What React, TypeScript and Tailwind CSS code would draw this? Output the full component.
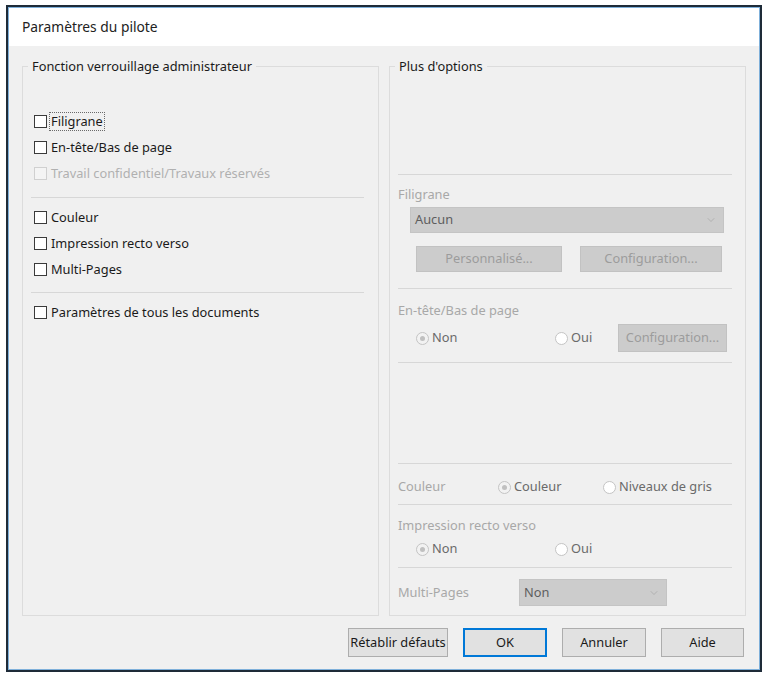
import { ChevronDown } from "lucide-react";

const font = { fontFamily: '"Noto Sans", "Open Sans", sans-serif' };

const Separator = ({ className = "" }: { className?: string }) => (
  <div className={`h-px bg-[#d7d7d7] ${className}`} />
);

const CheckRow = ({
  label,
  disabled,
  focused,
}: {
  label: string;
  disabled?: boolean;
  focused?: boolean;
}) => (
  <div className="flex items-center h-[26px] pl-[3px]">
    <span
      className={`w-[13px] h-[13px] border ${
        disabled ? "border-[#d0d0d0] bg-[#f4f4f4]" : "border-[#3a3a3a] bg-white"
      }`}
    />
    <span
      className={`ml-[2px] px-[1px] leading-[17px] border ${
        focused ? "border-dotted border-[#6a6a6a]" : "border-transparent"
      } ${disabled ? "text-[#b0b0b0]" : "text-[#1a1a1a]"}`}
    >
      {label}
    </span>
  </div>
);

const Radio = ({ label, checked }: { label: string; checked?: boolean }) => (
  <div className="flex items-center">
    <span
      className={`w-[13px] h-[13px] rounded-full border flex items-center justify-center ${
        checked ? "border-[#c4c4c4] bg-[#f2f2f2]" : "border-[#c4c4c4] bg-white"
      }`}
    >
      {checked && <span className="w-[5px] h-[5px] rounded-full bg-[#c0c0c0]" />}
    </span>
    <span className="ml-[3px] text-[#6a6a6a]">{label}</span>
  </div>
);

const Select = ({ value, className = "" }: { value: string; className?: string }) => (
  <div
    className={`flex items-center justify-between bg-[#cccccc] border border-[#c4c4c4] pl-[4px] pr-[6px] ${className}`}
  >
    <span className="text-[#5e5e5e]">{value}</span>
    <ChevronDown size={12} strokeWidth={1.2} color="#a0a0a0" />
  </div>
);

const DisabledButton = ({ label, className = "" }: { label: string; className?: string }) => (
  <div
    className={`flex items-center justify-center bg-[#cccccc] border border-[#c2c2c2] text-[#9c9c9c] ${className}`}
  >
    {label}
  </div>
);

const DialogButton = ({
  label,
  width,
  primary,
}: {
  label: string;
  width: string;
  primary?: boolean;
}) => (
  <div
    className={`h-[29px] flex items-center justify-center bg-[#e1e1e1] text-[#1a1a1a] ${width} ${
      primary ? "border-2 border-[#0078d7]" : "border border-[#adadad]"
    }`}
  >
    {label}
  </div>
);

export default function App() {
  return (
    <div className="w-[768px] h-[673px] bg-white pl-[6px] pt-[5px] text-[12.8px]" style={font}>
      <div className="w-[756px] h-[667px] border-2 border-[#1e2b38]">
        <div className="w-full h-full border border-[#7fb0da] flex flex-col">
          {/* title bar */}
          <div className="h-[38px] bg-white flex items-center pl-[13px] text-[13.8px] text-[#222]">
            Paramètres du pilote
          </div>

          <div className="flex-1 bg-[#f0f0f0] px-[13px] pt-[12px] flex flex-col">
            <div className="grid grid-cols-2 gap-[10px] h-[558px]">
              {/* left group */}
              <fieldset className="border border-[#dcdcdc] pl-[8px] pr-[14px]">
                <legend className="ml-[-3px] px-[4px] leading-[17px] text-[#1a1a1a]">
                  Fonction verrouillage administrateur
                </legend>
                <div className="pt-[33px]">
                  <CheckRow label="Filigrane" focused />
                  <CheckRow label="En-tête/Bas de page" />
                  <CheckRow label="Travail confidentiel/Travaux réservés" disabled />
                  <Separator className="mt-[11px] mb-[6px]" />
                  <CheckRow label="Couleur" />
                  <CheckRow label="Impression recto verso" />
                  <CheckRow label="Multi-Pages" />
                  <Separator className="mt-[10px] mb-[6px]" />
                  <CheckRow label="Paramètres de tous les documents" />
                </div>
              </fieldset>

              {/* right group */}
              <fieldset className="border border-[#dcdcdc] pl-[8px] pr-[13px] text-[#a8a8a8]">
                <legend className="ml-[-3px] px-[4px] leading-[17px] text-[#1a1a1a]">
                  Plus d'options
                </legend>
                <Separator className="mt-[99px]" />
                <div className="mt-[9px] leading-[20px]">Filigrane</div>
                <Select value="Aucun" className="mt-[3px] h-[26px] ml-[12px] mr-[8px]" />
                <div className="mt-[13px] flex justify-between pl-[18px] pr-[10px]">
                  <DisabledButton label="Personnalisé..." className="w-[146px] h-[26px]" />
                  <DisabledButton label="Configuration..." className="w-[142px] h-[26px]" />
                </div>
                <Separator className="mt-[16px]" />
                <div className="mt-[11px] leading-[20px]">En-tête/Bas de page</div>
                <div className="mt-[4px] h-[28px] flex items-center pl-[18px] pr-[5px]">
                  <div className="w-[139px]">
                    <Radio label="Non" checked />
                  </div>
                  <Radio label="Oui" />
                  <DisabledButton label="Configuration..." className="ml-auto w-[109px] h-[28px]" />
                </div>
                <Separator className="mt-[10px]" />
                <Separator className="mt-[100px]" />
                <div className="mt-[10px] h-[26px] flex items-center">
                  <span className="w-[100px]">Couleur</span>
                  <div className="w-[105px]">
                    <Radio label="Couleur" checked />
                  </div>
                  <Radio label="Niveaux de gris" />
                </div>
                <Separator className="mt-[4px]" />
                <div className="mt-[10px] leading-[20px]">Impression recto verso</div>
                <div className="mt-[4px] h-[20px] flex items-center pl-[18px]">
                  <div className="w-[139px]">
                    <Radio label="Non" checked />
                  </div>
                  <Radio label="Oui" />
                </div>
                <Separator className="mt-[8px]" />
                <div className="mt-[11px] flex items-center">
                  <span className="w-[121px]">Multi-Pages</span>
                  <Select value="Non" className="w-[148px] h-[27px]" />
                </div>
              </fieldset>
            </div>

            {/* dialog buttons */}
            <div className="mt-[12px] flex justify-end gap-[15px] pr-[2px]">
              <DialogButton label="Rétablir défauts" width="w-[100px]" />
              <DialogButton label="OK" width="w-[84px]" primary />
              <DialogButton label="Annuler" width="w-[84px]" />
              <DialogButton label="Aide" width="w-[83px]" />
            </div>
          </div>
        </div>
      </div>
    </div>
  );
}
